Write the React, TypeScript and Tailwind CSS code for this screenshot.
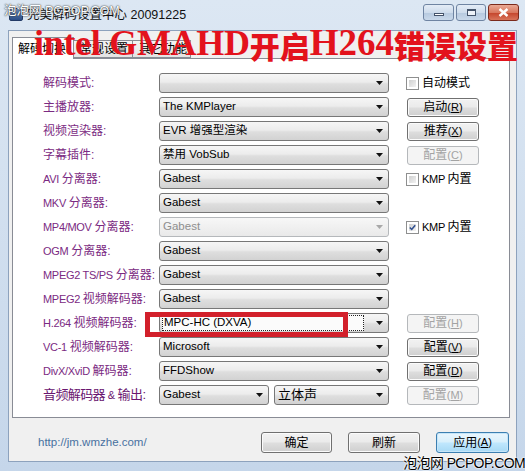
import clsx from "clsx";

type Right =
  | { type: "check"; label: string; checked?: boolean }
  | { type: "btn"; text: string; hot: string; disabled?: boolean };

type Row = {
  label: string;
  value: string;
  disabled?: boolean;
  focused?: boolean;
  split?: boolean;
  big?: boolean;
  right?: Right;
};

const rows: Row[] = [
  { label: "解码模式:", value: "", right: { type: "check", label: "自动模式" } },
  { label: "主播放器:", value: "The KMPlayer", right: { type: "btn", text: "启动", hot: "R" } },
  { label: "视频渲染器:", value: "EVR 增强型渲染", right: { type: "btn", text: "推荐", hot: "X" } },
  { label: "字幕插件:", value: "禁用 VobSub", right: { type: "btn", text: "配置", hot: "C", disabled: true } },
  { label: "AVI 分离器:", value: "Gabest", right: { type: "check", label: "KMP 内置" } },
  { label: "MKV 分离器:", value: "Gabest" },
  { label: "MP4/MOV 分离器:", value: "Gabest", disabled: true, right: { type: "check", label: "KMP 内置", checked: true } },
  { label: "OGM 分离器:", value: "Gabest" },
  { label: "MPEG2 TS/PS 分离器:", value: "Gabest" },
  { label: "MPEG2 视频解码器:", value: "Gabest" },
  { label: "H.264 视频解码器:", value: "MPC-HC (DXVA)", focused: true, right: { type: "btn", text: "配置", hot: "H", disabled: true } },
  { label: "VC-1 视频解码器:", value: "Microsoft", right: { type: "btn", text: "配置", hot: "V" } },
  { label: "DivX/XviD 解码器:", value: "FFDShow", right: { type: "btn", text: "配置", hot: "D" } },
  { label: "音频解码器 & 输出:", value: "Gabest", split: true, big: true, right: { type: "btn", text: "配置", hot: "M", disabled: true } },
];

const ui = "font-['Liberation_Sans','Noto_Sans_CJK_SC',sans-serif]";

// latin runs in labels are set a bit smaller, like Tahoma next to SimSun
function Label({ text }: { text: string }) {
  const parts = text.split(/([A-Za-z0-9./&\- ]+)/).filter(Boolean);
  return (
    <>
      {parts.map((p, i) =>
        /[A-Za-z0-9&]/.test(p) ? (
          <span key={i} className="text-[11px] tracking-[-0.3px]">
            {p}
          </span>
        ) : (
          <span key={i}>{p}</span>
        )
      )}
    </>
  );
}

function Arrow({ disabled }: { disabled?: boolean }) {
  return (
    <svg width="7" height="4" viewBox="0 0 7 4" className="shrink-0">
      <path d="M0 0h7L3.5 4z" fill={disabled ? "#a8a8a8" : "#111"} />
    </svg>
  );
}

function Combo({ value, disabled, focused, className }: { value: string; disabled?: boolean; focused?: boolean; className?: string }) {
  return (
    <div
      className={clsx(
        "h-[20px] rounded-[3px] border flex items-center pl-[2px] pr-[5px] gap-[4px]",
        disabled
          ? "border-[#b5b8bb] bg-[linear-gradient(#f7f7f7,#e9e9e9)]"
          : "border-[#777] bg-[linear-gradient(#f6f6f6_0%,#ececec_45%,#dedede_55%,#d2d2d2_100%)]",
        className
      )}
    >
      <div
        className={clsx(
          "flex-1 h-[16px] flex items-center pl-[1px] text-[11.5px] whitespace-nowrap",
          disabled ? "text-[#8e8e8e]" : "text-black",
          focused && "border border-dotted border-[#222] bg-[#fbfbfb] mr-[8px]"
        )}
      >
        {value}
      </div>
      <Arrow disabled={disabled} />
    </div>
  );
}

function Check({ label, checked }: { label: string; checked?: boolean }) {
  return (
    <div className="flex items-center gap-[3px] -ml-[1px]">
      <div className="w-[13px] h-[13px] border border-[#8e8f8f] bg-white p-[2px]">
        <div className="w-full h-full bg-[linear-gradient(135deg,#cfd0d0,#f2f2f2)] flex items-center justify-center">
          {checked && (
            <svg width="9" height="9" viewBox="0 0 9 9">
              <path d="M1 4.5l2.5 2.5L8 1.5" stroke="#2f4f8f" strokeWidth="2" fill="none" />
            </svg>
          )}
        </div>
      </div>
      <span className="text-[12px] text-black whitespace-nowrap">
        <Label text={label} />
      </span>
    </div>
  );
}

function Btn({ text, hot, disabled, def, className }: { text: string; hot?: string; disabled?: boolean; def?: boolean; className?: string }) {
  return (
    <div
      className={clsx(
        "rounded-[3px] border flex items-center justify-center text-[12px] whitespace-nowrap",
        disabled
          ? "border-[#b5b8bb] bg-[#f4f4f4] text-[#a3a3a3]"
          : def
          ? "border-[#3c7fb1] bg-[linear-gradient(#eaf6fd_0%,#d9f0fc_45%,#bee6fd_55%,#a7d9f5_100%)] text-black shadow-[inset_0_0_0_1px_#c6e6f9]"
          : "border-[#707070] bg-[linear-gradient(#f2f2f2_0%,#ebebeb_45%,#dddddd_55%,#cfcfcf_100%)] text-black shadow-[inset_0_0_0_1px_#fbfbfb]",
        className
      )}
    >
      {text}
      {hot && (
        <span className="text-[11px]">
          (<span className="underline">{hot}</span>)
        </span>
      )}
    </div>
  );
}

export default function App() {
  return (
    <div className={clsx("w-[525px] h-[471px] relative overflow-hidden bg-[linear-gradient(#dce7f3,#c5d6ea)] flex flex-col", ui)}>
      {/* title bar */}
      <div className="h-[30px] flex items-start shrink-0">
        <div className="mt-[8px] ml-[9px] w-[14px] h-[13px] rounded-[2px] bg-[linear-gradient(#6d8fc0,#2b4d86)] border border-[#223a66]" />
        <div className="ml-[4px] mt-[6px] text-[12.5px] text-[#111] whitespace-nowrap">完美解码设置中心 20091225</div>
        <div className="ml-auto mr-[6px] mt-[4px] flex gap-[2px]">
          <div className="w-[31px] h-[17px] rounded-[3px] border border-[#6f84a2] bg-[linear-gradient(#e4ecf6_0%,#cedcec_50%,#b6c9df_51%,#c8d8ea_100%)] flex items-end justify-center pb-[4px]">
            <div className="w-[10px] h-[3px] bg-white border border-[#44536a]" />
          </div>
          <div className="w-[30px] h-[17px] rounded-[3px] border border-[#6f84a2] bg-[linear-gradient(#e4ecf6_0%,#cedcec_50%,#b6c9df_51%,#c8d8ea_100%)] flex items-center justify-center">
            <div className="w-[9px] h-[7px] border border-[#44536a] border-t-2 bg-[#eef3f9]" />
          </div>
          <div className="w-[31px] h-[17px] rounded-[3px] border border-[#7b2a1c] bg-[linear-gradient(#eaa995_0%,#d9785f_50%,#c4432a_51%,#d8745a_100%)] flex items-center justify-center">
            <svg width="11" height="9" viewBox="0 0 11 9">
              <path d="M1.5 1l8 7M9.5 1l-8 7" stroke="#fff" strokeWidth="2.4" />
            </svg>
          </div>
        </div>
      </div>

      {/* client area */}
      <div className="mx-[8px] h-[432px] bg-[#f0f0f0] border border-[#8da2bd] flex flex-col">
        <div className="pl-[3px] pr-[6px] pt-[6px]">
          {/* tabs */}
          <div className="h-[21px] flex items-end">
            <div className="h-[22px] w-[62px] -mb-[1px] border border-b-0 border-[#898c95] bg-white pl-[5px] pt-[2px] text-[12px] text-black relative z-10">解码切换</div>
            <div className="h-[18px] w-[59px] border border-l-0 border-[#898c95] bg-[linear-gradient(#f3f3f3,#e3e3e3)] pl-[6px] text-[12px] text-black leading-[17px]">常规设置</div>
            <div className="h-[18px] w-[58px] border border-l-0 border-[#898c95] bg-[linear-gradient(#f3f3f3,#e3e3e3)] pl-[6px] text-[12px] text-black leading-[17px]">其它功能</div>
          </div>
          {/* panel */}
          <div className="h-[360px] border border-[#898c95] bg-white pt-[14px] flex flex-col gap-[4px]">
            {rows.map((r) => (
              <div key={r.label} className="h-[20px] flex items-center">
                <div
                  className={clsx(
                    "w-[146px] pl-[30px] whitespace-nowrap",
                    r.big ? "text-[13px] tracking-[-0.6px] text-[#6a1670]" : "text-[12px] text-[#7b2a82]"
                  )}
                >
                  <Label text={r.label} />
                </div>
                {r.split ? (
                  <div className="w-[230px] flex gap-[5px]">
                    <Combo value={r.value} className="w-[110px]" />
                    <Combo value="立体声" className="w-[115px] [&>div:first-child]:text-[13px]" />
                  </div>
                ) : (
                  <Combo value={r.value} disabled={r.disabled} focused={r.focused} className="w-[230px]" />
                )}
                <div className="ml-[18px] w-[72px] h-[20px] flex items-center">
                  {r.right?.type === "check" && <Check label={r.right.label} checked={r.right.checked} />}
                  {r.right?.type === "btn" && (
                    <Btn text={r.right.text} hot={r.right.hot} disabled={r.right.disabled} className="w-[72px] h-[19px]" />
                  )}
                </div>
              </div>
            ))}
          </div>
        </div>

        {/* bottom bar */}
        <div className="flex-1 flex items-center pl-[29px] pr-[7px] pt-[6px]">
          <span className="text-[11.5px] text-[#4870a0]">http://jm.wmzhe.com/</span>
          <div className="ml-auto flex gap-[16px]">
            <Btn text="确定" className="w-[71px] h-[21px]" />
            <Btn text="刷新" className="w-[72px] h-[21px]" />
            <Btn text="应用" hot="A" def className="w-[73px] h-[21px]" />
          </div>
        </div>
      </div>
      <div className="flex-1" />

      {/* red highlight on H.264 row */}
      <div className="absolute z-20 left-[145px] top-[312px] w-[203px] h-[25px] border-[5px] border-[#d2202b]" />

      {/* big red caption */}
      <div className="absolute z-20 left-[34px] top-[24px] whitespace-nowrap leading-none text-[#e3121c] font-bold flex items-end">
        <span className="font-['Liberation_Serif',serif] text-[36px] tracking-[-0.3px]">intel GMAHD</span>
        <span className="font-['Noto_Sans_CJK_SC',sans-serif] text-[30px] font-black mb-[1px]">开启</span>
        <span className="font-['Liberation_Serif',serif] text-[37px]">H264</span>
        <span className="font-['Noto_Sans_CJK_SC',sans-serif] text-[31px] font-black mb-[1px]">错误设置</span>
      </div>

      {/* watermarks */}
      <div className="absolute z-20 left-[4px] top-[2px] text-[12.5px] text-white whitespace-nowrap [text-shadow:0_0_2px_#333,0_0_1px_#333]">
        泡泡网 PCPOP.COM
      </div>
      <div className="absolute z-20 right-[0px] bottom-[1px] text-[14px] text-black whitespace-nowrap tracking-[-0.6px] leading-none [text-shadow:0_0_2px_#fff,0_0_2px_#fff,0_0_1px_#fff]">
        泡泡网 PCPOP.COM
      </div>
    </div>
  );
}
